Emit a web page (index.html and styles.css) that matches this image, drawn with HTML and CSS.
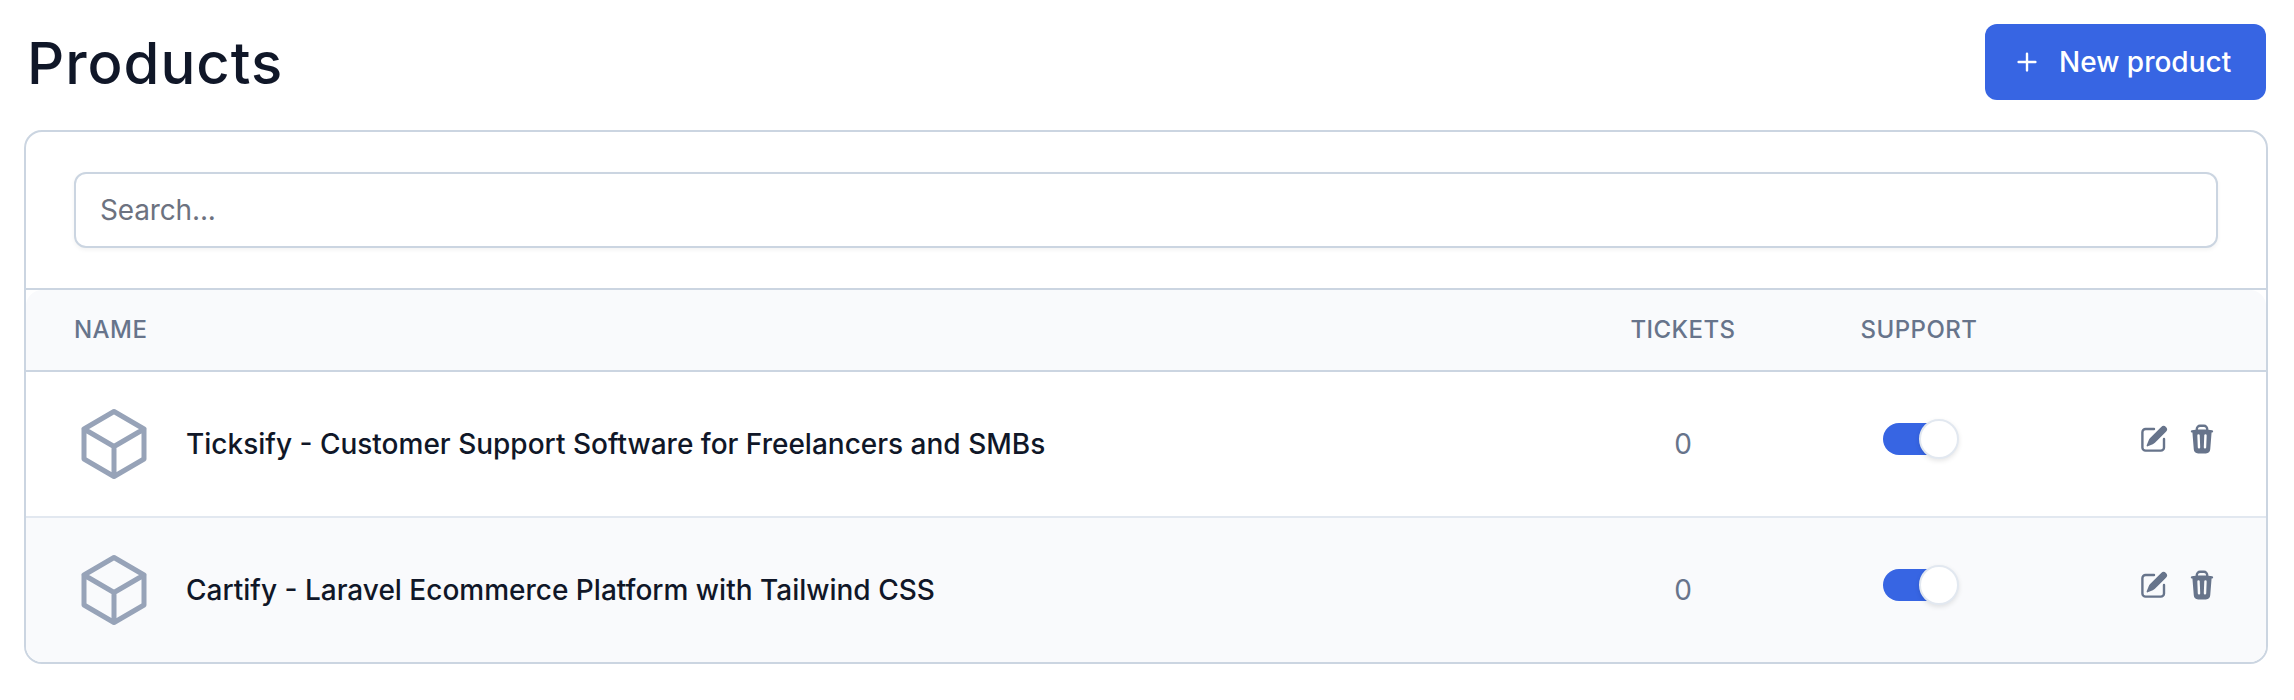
FILE: index.html
```html
<!DOCTYPE html>
<html lang="en">
<head>
<meta charset="utf-8">
<title>Products</title>
<link rel="stylesheet" href="styles.css">
</head>
<body>
<svg class="sprite" width="0" height="0" aria-hidden="true">
  <symbol id="plus" viewBox="0 0 20 20"><path d="M10.75 4.75a.75.75 0 00-1.5 0v4.5h-4.5a.75.75 0 000 1.5h4.5v4.5a.75.75 0 001.5 0v-4.5h4.5a.75.75 0 000-1.5h-4.5v-4.5z"/></symbol>
  <symbol id="cube" viewBox="0 0 24 24"><path fill="none" stroke="currentColor" stroke-width="1.5" stroke-linecap="round" stroke-linejoin="round" d="M21 7.5l-9-5.25L3 7.5m18 0l-9 5.25m9-5.25v9l-9 5.25M3 7.5l9 5.25M3 7.5v9l9 5.25m0-9v9"/></symbol>
  <symbol id="edit" viewBox="0 0 20 20"><path d="M5.433 13.917l1.262-3.155A4 4 0 017.58 9.42l6.92-6.918a2.121 2.121 0 013 3l-6.92 6.918c-.383.383-.84.685-1.343.886l-3.154 1.262a.5.5 0 01-.65-.65z"/><path d="M3.5 5.75c0-.69.56-1.25 1.25-1.25H10A.75.75 0 0010 3H4.75A2.75 2.75 0 002 5.75v9.5A2.75 2.75 0 004.75 18h9.5A2.75 2.75 0 0017 15.25V10a.75.75 0 00-1.5 0v5.25c0 .69-.56 1.25-1.25 1.25h-9.5c-.69 0-1.25-.56-1.25-1.25v-9.5z"/></symbol>
  <symbol id="trash" viewBox="0 0 20 20"><path fill-rule="evenodd" clip-rule="evenodd" d="M8.75 1A2.75 2.75 0 006 3.75v.443c-.795.077-1.584.176-2.365.298a.75.75 0 10.23 1.482l.149-.022.841 10.518A2.75 2.75 0 007.596 19h4.807a2.75 2.75 0 002.742-2.53l.841-10.52.149.023a.75.75 0 00.23-1.482A41.03 41.03 0 0014 4.193V3.75A2.75 2.75 0 0011.25 1h-2.5zM10 4c.84 0 1.673.025 2.5.075V3.75c0-.69-.56-1.25-1.25-1.25h-2.5c-.69 0-1.25.56-1.25 1.25v.325C8.327 4.025 9.16 4 10 4zM8.58 7.72a.75.75 0 00-1.5.06l.3 7.5a.75.75 0 101.5-.06l-.3-7.5zm4.34.06a.75.75 0 10-1.5-.06l-.3 7.5a.75.75 0 101.5.06l.3-7.5z"/></symbol>
</svg>
<header class="page-header">
  <h1 class="title">Products</h1>
  <button class="new-button" type="button"><svg class="icon"><use href="#plus"/></svg><span>New product</span></button>
</header>
<main class="card">
  <div class="search">
    <input class="search-input" type="text" placeholder="Search..." aria-label="Search">
  </div>
  <div class="table-wrap">
    <div class="row head">
      <div>Name</div><div class="center">Tickets</div><div class="center">Support</div><div></div>
    </div>
    <div class="row item">
      <div class="name"><svg class="cube"><use href="#cube"/></svg><span>Ticksify - Customer Support Software for Freelancers and SMBs</span></div>
      <div class="center">0</div>
      <div class="support"><span class="toggle"><span class="knob"></span></span></div>
      <div class="actions"><svg class="icon"><use href="#edit"/></svg><svg class="icon"><use href="#trash"/></svg></div>
    </div>
    <div class="row item alt">
      <div class="name"><svg class="cube"><use href="#cube"/></svg><span>Cartify - Laravel Ecommerce Platform with Tailwind CSS</span></div>
      <div class="center">0</div>
      <div class="support"><span class="toggle"><span class="knob"></span></span></div>
      <div class="actions"><svg class="icon"><use href="#edit"/></svg><svg class="icon"><use href="#trash"/></svg></div>
    </div>
  </div>
</main>
</body>
</html>
```
FILE: styles.css
```css
* { box-sizing: border-box; }
body {
  margin: 0;
  padding: 24px 26px 36px 24px;
  background: #fff;
  color: #101728;
  font: 400 28px/40px Inter, sans-serif;
}
.sprite { display: none; }
.page-header {
  display: flex;
  align-items: center;
  justify-content: space-between;
  height: 76px;
  padding: 0 2px 0 3px;
  margin-bottom: 30px;
}
.title {
  margin: 0;
  padding-top: 2px;
  font-size: 58px;
  line-height: 76px;
  font-weight: 500;
  letter-spacing: 1px;
}
.new-button {
  display: flex;
  align-items: center;
  gap: 16px;
  width: 281px;
  height: 76px;
  padding: 0 0 0 26px;
  border: 0;
  border-radius: 12px;
  background: #3765e3;
  color: #fff;
  font: 500 28px/40px Inter, sans-serif;
  white-space: nowrap;
}
.icon { width: 32px; height: 32px; fill: currentColor; flex: none; }
.card {
  height: 534px;
  border: 2px solid #cbd5e1;
  border-radius: 18px;
  overflow: hidden;
}
.search { padding: 40px 48px; height: 156px; }
.search-input {
  display: block;
  width: 100%;
  height: 76px;
  padding: 0 24px;
  border: 2px solid #cbd5e1;
  border-radius: 12px;
  box-shadow: 0 2px 4px rgba(0, 0, 0, 0.05);
  background: #fff;
  font: 400 28px/40px Inter, sans-serif;
  letter-spacing: -0.15px;
}
.search-input::placeholder { color: #6c7280; opacity: 1; }
.table-wrap { border-top: 2px solid #cbd5e1; }
.row {
  display: grid;
  grid-template-columns: 1fr 236px 236px 229px;
  align-items: center;
  padding-left: 48px;
}
.head {
  height: 82px;
  background: #f9fafc;
  border-bottom: 2px solid #cbd5e1;
  border-top-left-radius: 16px;
  border-top-right-radius: 16px;
  color: #67748b;
  font-size: 24px;
  line-height: 32px;
  font-weight: 500;
  letter-spacing: 0.45px;
  text-transform: uppercase;
}
.item { height: 144px; color: #67748b; }
.alt { height: 146px; border-top: 2px solid #e2e8f0; background: #f9fafc; }
.center { text-align: center; }
.name {
  display: flex;
  align-items: center;
  gap: 32px;
  color: #101728;
  font-weight: 500;
}
.cube { width: 80px; height: 80px; color: #97a3b8; flex: none; }
.support { display: flex; justify-content: center; padding-bottom: 10px; }
.toggle {
  display: flex;
  align-items: center;
  justify-content: flex-end;
  width: 72px;
  height: 32px;
  margin: 4px 0;
  border-radius: 16px;
  background: #3765e3;
}
.knob {
  flex: none;
  width: 40px;
  height: 40px;
  margin-right: -4px;
  border: 2px solid #e2e8f0;
  border-radius: 50%;
  background: #fff;
  box-shadow: 0 2px 5px rgba(0, 0, 0, 0.1);
}
.actions {
  display: flex;
  justify-content: flex-end;
  gap: 16px;
  padding: 0 48px 10px 0;
}
```
